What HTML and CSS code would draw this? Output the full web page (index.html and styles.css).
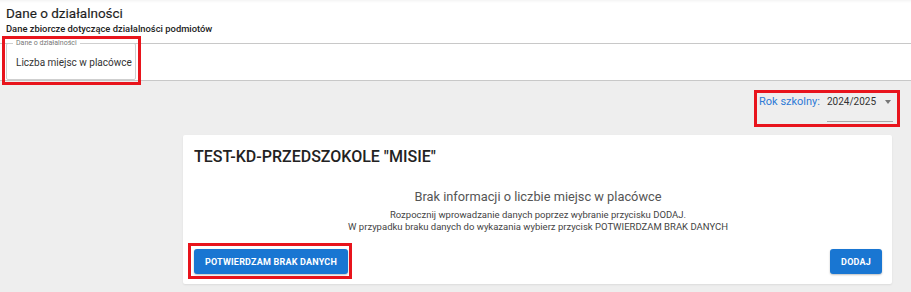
FILE: index.html
```html
<!DOCTYPE html>
<html lang="pl">
<head>
<meta charset="utf-8">
<title>Dane o działalności</title>
<link rel="stylesheet" href="styles.css">
</head>
<body>
<header class="header">
  <h1 class="title">Dane o działalności</h1>
  <div class="subtitle">Dane zbiorcze dotyczące działalności podmiotów</div>
</header>
<nav class="strip">
  <div class="fieldset">
    <span class="legend">Dane o działalności</span>
    <span class="field-value">Liczba miejsc w placówce</span>
  </div>
</nav>
<main class="content">
  <div class="year-row">
    <div class="year">
      <span class="year-label">Rok szkolny:</span>
      <div class="select">
        <span class="select-value">2024/2025</span>
        <span class="caret"></span>
      </div>
    </div>
  </div>
  <section class="card">
    <h2 class="card-title">TEST-KD-PRZEDSZOKOLE "MISIE"</h2>
    <div class="empty">
      <div class="empty-title">Brak informacji o liczbie miejsc w placówce</div>
      <div class="empty-text">Rozpocznij wprowadzanie danych poprzez wybranie przycisku DODAJ.</div>
      <div class="empty-text">W przypadku braku danych do wykazania wybierz przycisk POTWIERDZAM BRAK DANYCH</div>
    </div>
    <div class="actions">
      <button class="btn">POTWIERDZAM BRAK DANYCH</button>
      <button class="btn">DODAJ</button>
    </div>
  </section>
</main>
<div class="mark mark-field"></div>
<div class="mark mark-year"></div>
<div class="mark mark-btn"></div>
</body>
</html>
```
FILE: styles.css
```css
* { box-sizing: border-box; }
html, body { margin: 0; padding: 0; }
body {
  background: #eeeeee;
  font-family: Roboto, "Liberation Sans", Arial, sans-serif;
  color: #222;
  width: 911px;
  height: 292px;
  overflow: hidden;
  position: relative;
}
.header {
  background: #fff;
  height: 43px;
  padding: 5px 6px 0;
  box-shadow: inset 0 3px 3px -2px rgba(0,0,0,0.06);
}
.title {
  margin: 0;
  font-size: 13.5px;
  font-weight: 400;
  line-height: 16px;
  color: #1e1e1e;
  -webkit-text-stroke: 0.15px #1e1e1e;
}
.subtitle {
  font-size: 9.4px;
  font-weight: 500;
  line-height: 12px;
  margin-top: 2px;
  color: #222;
}
.strip {
  background: #fff;
  height: 38px;
  border-top: 1px solid #c8c8c8;
  border-bottom: 1px solid #c8c8c8;
  padding: 0 0 0 6px;
}
.fieldset {
  position: relative;
  width: 130px;
  height: 37px;
  margin-top: -1px;
  border: 1px solid #cfcfcf;
  border-radius: 2px;
  display: flex;
  align-items: center;
  padding: 2px 0 0 9px;
}
.legend {
  position: absolute;
  left: 6px;
  top: -5px;
  background: #fff;
  padding: 0 3px;
  font-size: 7px;
  line-height: 9px;
  color: #777;
}
.field-value {
  font-size: 10px;
  white-space: nowrap;
  color: #333;
}
.content {
  padding: 9px 18px 0 183px;
}
.year-row {
  display: flex;
  justify-content: flex-end;
  height: 45px;
}
.year {
  display: flex;
  align-items: flex-start;
}
.year-label {
  color: #2f7bd6;
  font-size: 11px;
  line-height: 24px;
  margin-right: 7px;
}
.select {
  width: 66px;
  height: 32px;
  border-bottom: 1px solid #a8a8a8;
  display: flex;
  align-items: flex-start;
  justify-content: space-between;
}
.select-value {
  font-size: 10px;
  line-height: 24px;
  color: #333;
}
.caret {
  width: 0;
  height: 0;
  margin-top: 10px;
  margin-right: 2px;
  border-left: 3.5px solid transparent;
  border-right: 3.5px solid transparent;
  border-top: 4px solid #777;
}
.card {
  background: #fff;
  width: 709px;
  border-radius: 2px;
  box-shadow: 0 1px 2px rgba(0,0,0,0.08);
  padding: 12px 10px 10px 11px;
}
.card-title {
  margin: 0;
  font-size: 16px;
  font-weight: 500;
  line-height: 20px;
  color: #222;
}
.empty {
  text-align: center;
  padding-top: 21px;
  color: #555;
}
.empty-title {
  font-size: 12.8px;
  line-height: 17px;
  color: #555;
  margin-bottom: 4px;
}
.empty-text {
  font-size: 9.5px;
  line-height: 12px;
  color: #444;
}
.actions {
  display: flex;
  justify-content: space-between;
  margin-top: 16px;
}
.btn {
  background: #1976d2;
  color: #fff;
  border: none;
  border-radius: 3px;
  height: 25px;
  padding: 0 11px;
  font-family: Roboto, "Liberation Sans", Arial, sans-serif;
  font-size: 9px;
  font-weight: 700;
  letter-spacing: 0.2px;
  box-shadow: 0 1px 2px rgba(0,0,0,0.25);
}
.mark {
  position: absolute;
  border: 3px solid #e8141c;
  pointer-events: none;
}
.mark-field { left: 2px; top: 36px; width: 139px; height: 49px; }
.mark-year { left: 754px; top: 90px; width: 146px; height: 37px; }
.mark-btn { left: 188px; top: 243px; width: 164px; height: 36px; }
```
